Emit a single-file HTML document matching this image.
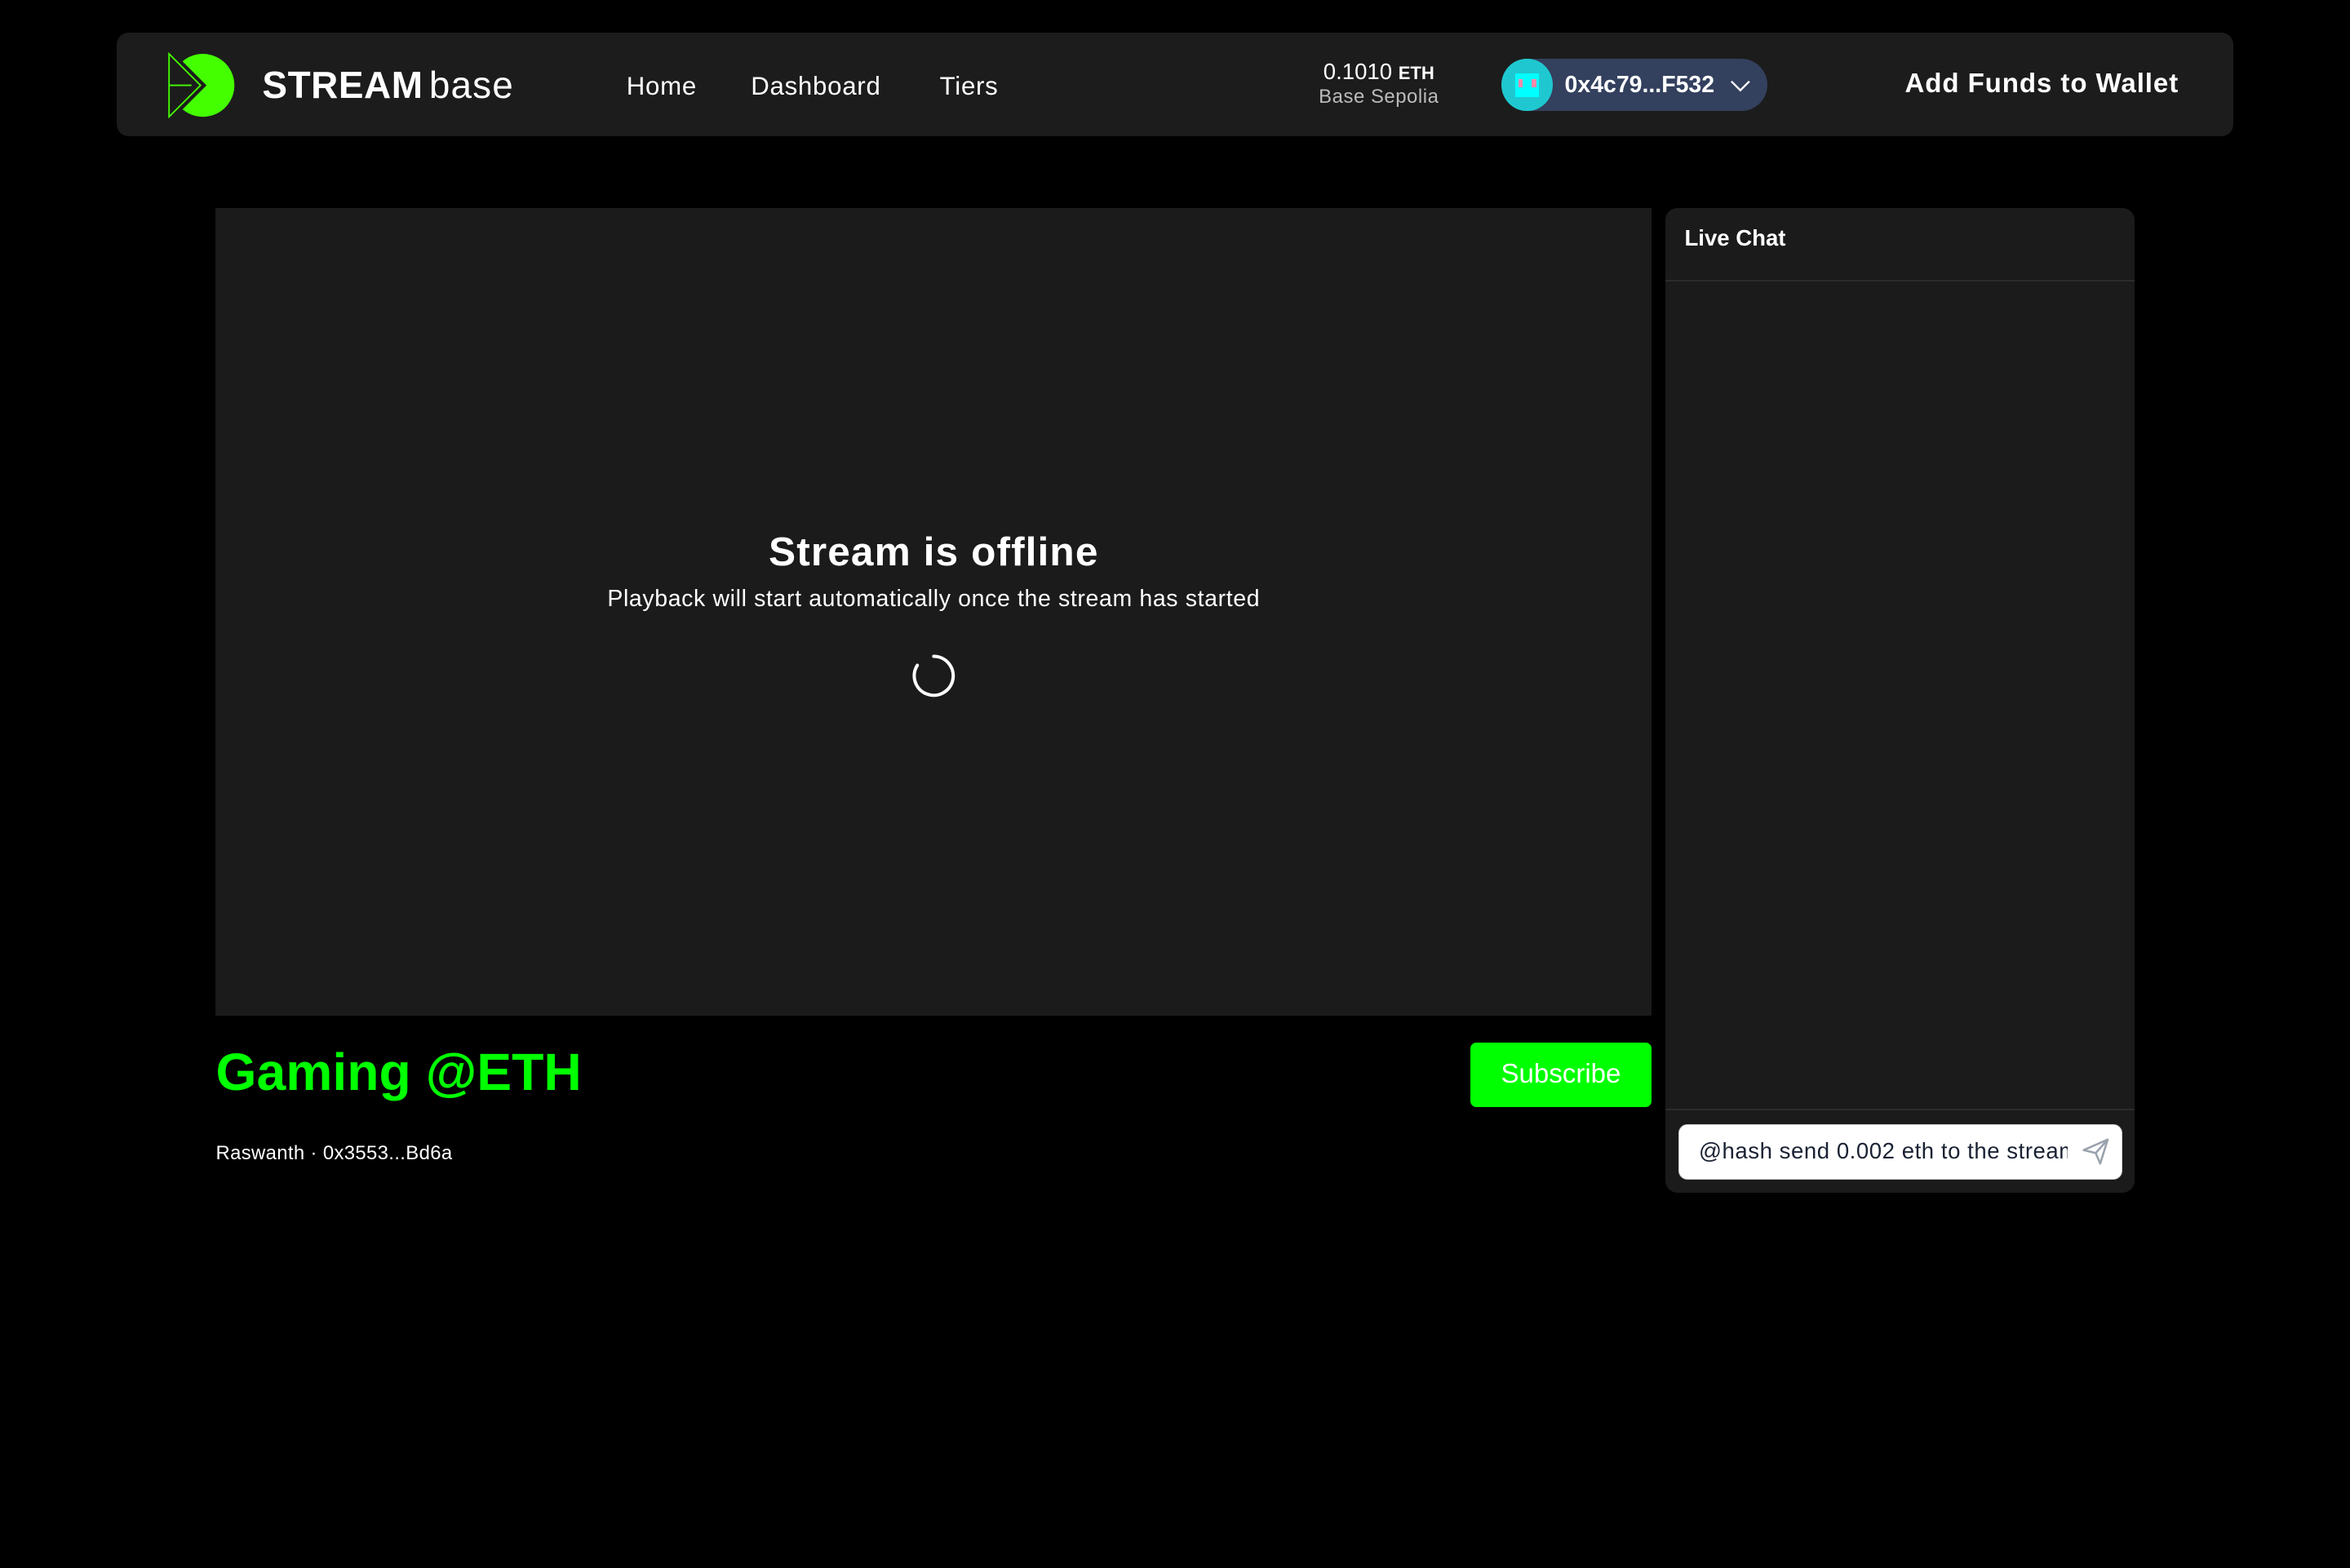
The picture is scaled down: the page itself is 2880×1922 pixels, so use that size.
<!DOCTYPE html>
<html><head><meta charset="utf-8"><style>
html,body{margin:0;padding:0;background:#000;}
body{width:1568px;height:1046px;zoom:1.836735;position:relative;overflow:hidden;font-family:"Liberation Sans",sans-serif;color:#fff;}
.a{position:absolute;}
.nav{left:78px;top:22px;width:1412px;height:69px;background:#1c1c1c;border-radius:8px;}
.link{top:48px;font-size:17px;letter-spacing:0.4px;}
</style></head><body>
<div class="a nav"></div>
<svg class="a" style="left:108px;top:30px" width="56" height="54" viewBox="0 0 56 54">
<path d="M14 11 A21 21 0 1 1 14 43 L30 27 Z" fill="#44ff00"/>
<path d="M5 6 L26 27 L5 48 Z M5 27 L20 27" fill="none" stroke="#44ff00" stroke-width="1"/>
</svg>
<div class="a" style="left:175px;top:42px;font-size:25px;font-weight:bold;letter-spacing:0.3px;">STREAM<span style="font-weight:normal;margin-left:4px;letter-spacing:0.6px">base</span></div>
<div class="a link" style="left:418px">Home</div>
<div class="a link" style="left:501px">Dashboard</div>
<div class="a link" style="left:627px">Tiers</div>
<div class="a" style="left:860px;width:120px;text-align:center;top:39px;font-size:15px">0.1010 <b style="font-size:12px">ETH</b></div>
<div class="a" style="left:860px;width:120px;text-align:center;top:57px;font-size:13px;color:#bbb;letter-spacing:0.3px">Base Sepolia</div>
<div class="a" style="left:1002px;top:39px;width:177px;height:35px;border-radius:18px;background:#33405e;"></div>
<div class="a" style="left:1002px;top:39px;width:34px;height:35px;border-radius:50%;background:#1fc8d0;overflow:hidden">
<div class="a" style="left:9px;top:10px;width:16px;height:16px;background:#0ff"></div>
<div class="a" style="left:11px;top:14px;width:3px;height:5px;background:#f8a"></div>
<div class="a" style="left:20px;top:14px;width:3px;height:5px;background:#f8a"></div>
</div>
<div class="a" style="left:1044px;top:48px;font-size:15.5px;font-weight:bold">0x4c79...F532</div>
<svg class="a" style="left:1154px;top:52px" width="14" height="10"><path d="M1 2 L7 8 L13 2" fill="none" stroke="#fff" stroke-width="1.3"/></svg>
<div class="a" style="left:1271px;top:46px;font-size:18px;font-weight:bold;letter-spacing:0.5px">Add Funds to Wallet</div>

<div class="a" style="left:144px;top:139px;width:958px;height:539px;background:#1b1b1b"></div>
<div class="a" style="left:144px;width:958px;text-align:center;top:352px;font-size:27px;font-weight:bold;letter-spacing:0.6px">Stream is offline</div>
<div class="a" style="left:144px;width:958px;text-align:center;top:391px;font-size:15.5px;letter-spacing:0.35px">Playback will start automatically once the stream has started</div>
<svg class="a" style="left:607px;top:435px" width="32" height="32"><path d="M16 3 A13 13 0 1 1 5 9" fill="none" stroke="#fff" stroke-width="2.2" stroke-linecap="round"/></svg>

<div class="a" style="left:144px;top:695px;font-size:35px;font-weight:bold;color:#00ff00">Gaming @ETH</div>
<div class="a" style="left:981px;top:696px;width:121px;height:43px;background:#00ff00;border-radius:4px;text-align:center;line-height:43px;font-size:18px">Subscribe</div>
<div class="a" style="left:144px;top:762px;font-size:13px;letter-spacing:0.2px">Raswanth · 0x3553...Bd6a</div>

<div class="a" style="left:1111px;top:139px;width:313px;height:657px;background:#1b1b1b;border-radius:8px"></div>
<div class="a" style="left:1124px;top:150px;font-size:15px;font-weight:bold">Live Chat</div>
<div class="a" style="left:1111px;top:187px;width:313px;height:1px;background:#2c2c2c"></div>
<div class="a" style="left:1111px;top:740px;width:313px;height:1px;background:#2c2c2c"></div>
<div class="a" style="left:1120px;top:750px;width:296px;height:37px;background:#fff;border-radius:6px;border:1px solid #ccc;box-sizing:border-box;overflow:hidden">
<div class="a" style="left:13px;top:9px;width:246px;overflow:hidden;white-space:nowrap;font-size:15px;color:#1a2233;letter-spacing:0.3px">@hash send 0.002 eth to the streamer</div>
<svg class="a" style="left:268px;top:9px" width="20" height="18"><path d="M2 8 L18 1 L13 17 L10 10 Z M10 10 L18 1" fill="none" stroke="#9aa3ad" stroke-width="1.4" stroke-linejoin="round"/></svg>
</div>
</body></html>
